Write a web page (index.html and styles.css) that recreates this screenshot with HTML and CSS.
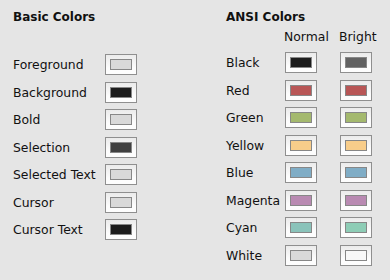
FILE: index.html
```html
<!DOCTYPE html>
<html lang="en">
  <head>
    <meta charset="UTF-8" />
    <title>Colors</title>
    <link rel="stylesheet" href="styles.css">
  </head>
  <body>
    <div class="panel">
      <div class="section basic">
        <h2 class="section-title">Basic Colors</h2>
        <div class="color-grid basic-grid">
          <span class="label">Foreground</span>
          <span class="well"><span class="swatch c-light"></span></span>
          <span class="label">Background</span>
          <span class="well"><span class="swatch c-black"></span></span>
          <span class="label">Bold</span>
          <span class="well"><span class="swatch c-light"></span></span>
          <span class="label">Selection</span>
          <span class="well"><span class="swatch c-selection"></span></span>
          <span class="label">Selected Text</span>
          <span class="well"><span class="swatch c-light"></span></span>
          <span class="label">Cursor</span>
          <span class="well"><span class="swatch c-light"></span></span>
          <span class="label">Cursor Text</span>
          <span class="well"><span class="swatch c-black"></span></span>
        </div>
      </div>

      <div class="section ansi">
        <h2 class="section-title">ANSI Colors</h2>
        <div class="column-heads">
          <span>Normal</span>
          <span>Bright</span>
        </div>
        <div class="color-grid ansi-grid">
          <span class="label">Black</span>
          <span class="well"><span class="swatch c-black"></span></span>
          <span class="well"><span class="swatch c-gray"></span></span>
          <span class="label">Red</span>
          <span class="well"><span class="swatch c-red"></span></span>
          <span class="well"><span class="swatch c-red"></span></span>
          <span class="label">Green</span>
          <span class="well"><span class="swatch c-green"></span></span>
          <span class="well"><span class="swatch c-green"></span></span>
          <span class="label">Yellow</span>
          <span class="well"><span class="swatch c-yellow"></span></span>
          <span class="well"><span class="swatch c-yellow"></span></span>
          <span class="label">Blue</span>
          <span class="well"><span class="swatch c-blue"></span></span>
          <span class="well"><span class="swatch c-blue"></span></span>
          <span class="label">Magenta</span>
          <span class="well"><span class="swatch c-magenta"></span></span>
          <span class="well"><span class="swatch c-magenta"></span></span>
          <span class="label">Cyan</span>
          <span class="well"><span class="swatch c-cyan"></span></span>
          <span class="well"><span class="swatch c-cyan-bright"></span></span>
          <span class="label">White</span>
          <span class="well"><span class="swatch c-light"></span></span>
          <span class="well"><span class="swatch c-white"></span></span>
        </div>
      </div>
    </div>
  </body>
</html>
```

FILE: styles.css
```css
body {
  margin: 0;
  background-color: #e5e5e5;
  color: #111;
  font-family: "DejaVu Sans", "Liberation Sans", sans-serif;
  font-size: 12.4px;
}
.panel {
  display: flex;
  padding: 9px 0 0 13px;
}
.basic {
  width: 213px;
}
.section-title {
  margin: 0;
  font-size: 12px;
  font-weight: bold;
  line-height: 16px;
}
.color-grid {
  display: grid;
  grid-auto-rows: 21px;
  row-gap: 6.5px;
  align-items: center;
}
.basic-grid {
  grid-template-columns: 92px 32px;
  margin-top: 29px;
}
.ansi-grid {
  grid-template-columns: 59px 32px 23px 32px;
  margin-top: 7px;
}
.ansi-grid .well:nth-child(3n) {
  grid-column: 4;
}
.column-heads {
  display: flex;
  padding-left: 58px;
  gap: 10px;
  line-height: 16px;
  margin-top: 4px;
}
.column-heads span:first-child {
  width: 45px;
}
.label {
  white-space: nowrap;
}
.well {
  box-sizing: border-box;
  width: 32px;
  height: 21px;
  border: 1px solid #8f8f8f;
  background: linear-gradient(#ebebeb, #fdfdfd 70%);
  display: flex;
  align-items: center;
  justify-content: center;
}
.swatch {
  box-sizing: border-box;
  width: 22px;
  height: 11px;
  border: 1px solid #878787;
}
.c-light { background-color: #d9d9d9; }
.c-black { background-color: #1c1c1c; }
.c-selection { background-color: #404040; }
.c-gray { background-color: #626262; }
.c-red { background-color: #b85656; }
.c-green { background-color: #a4b96e; }
.c-yellow { background-color: #f8cd8a; }
.c-blue { background-color: #80adc6; }
.c-magenta { background-color: #b98ab2; }
.c-cyan { background-color: #8ac3ba; }
.c-cyan-bright { background-color: #8ecdb6; }
.c-white { background-color: #f8f8f8; }
```
